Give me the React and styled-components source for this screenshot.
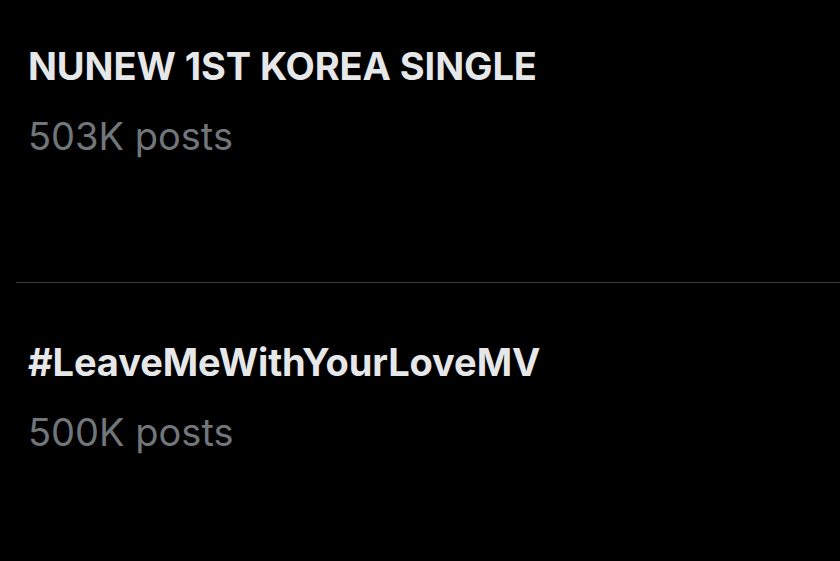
import React from "react";
import styled, { createGlobalStyle } from "styled-components";

const Global = createGlobalStyle`
  html, body { margin: 0; padding: 0; background: #000; }
  body { font-family: Inter, "Noto Sans", sans-serif; -webkit-font-smoothing: antialiased; }
  #root { width: 840px; height: 561px; overflow: hidden; background: #000; }
`;

const List = styled.div`
  display: flex;
  flex-direction: column;
  padding-top: 43px;
`;

const Trend = styled.div`
  display: flex;
  flex-direction: column;
  padding: ${(p) => p.$top}px 0 0 28px;
  height: ${(p) => p.$height}px;
  box-sizing: border-box;
`;

const Title = styled.div`
  color: #e6e7e8;
  font-weight: 700;
  font-size: 38px;
  line-height: 46px;
  letter-spacing: -0.1px;
  white-space: nowrap;
`;

const Count = styled.div`
  color: #71767b;
  font-weight: 400;
  font-size: 38px;
  line-height: 46px;
  margin-top: 24px;
  white-space: nowrap;
`;

const Divider = styled.hr`
  margin: 0 0 0 16px;
  border: none;
  height: 1px;
  background: #3a3d40;
`;

export default function App() {
  return (
    <>
      <Global />
      <List>
        <Trend $top={0} $height={239}>
          <Title>NUNEW 1ST KOREA SINGLE</Title>
          <Count>503K posts</Count>
        </Trend>
        <Divider />
        <Trend $top={56} $height={240}>
          <Title>#LeaveMeWithYourLoveMV</Title>
          <Count>500K posts</Count>
        </Trend>
      </List>
    </>
  );
}
